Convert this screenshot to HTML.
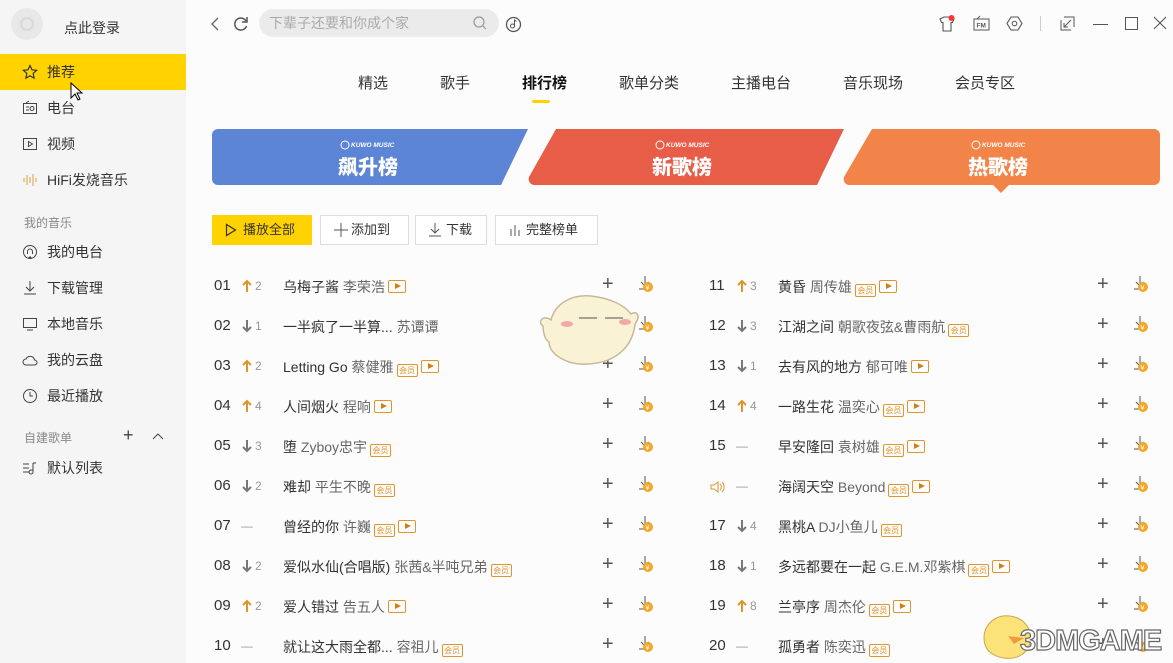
<!DOCTYPE html><html><head><meta charset="utf-8"><style>
*{margin:0;padding:0;box-sizing:border-box}
body{width:1173px;height:663px;overflow:hidden;background:#fcfcfc;font-family:"Liberation Sans","Noto Sans CJK SC",sans-serif;position:relative;color:#333}
.a{position:absolute;white-space:nowrap}
#side{position:absolute;left:0;top:0;width:186px;height:663px;background:#f5f5f5}
.si{position:absolute;left:0;width:186px;height:36px;font-size:14px;color:#333;line-height:36px;padding-left:47px}
.si svg{position:absolute;left:22px;top:10px}
.sh{position:absolute;left:24px;font-size:12px;color:#888}
.tab{position:absolute;top:72px;font-size:15px;color:#333}
.btn{position:absolute;top:215px;height:30px;border:1px solid #ddd;background:#fff;font-size:13px;line-height:28px;color:#333;padding-left:30px}
.row{position:absolute;height:20px;width:460px;font-size:14px}
.row .n{position:absolute;left:0;top:0;font-size:15px;color:#333}
.row .ar{position:absolute;left:27px;top:2px}
.row .c{position:absolute;left:41px;top:2px;font-size:12px;color:#999}
.row .t{position:absolute;left:69px;top:0;color:#333}
.row .t span{color:#666}
.vip,.mv{display:inline-block;vertical-align:-1px;border:1px solid #e0952c;border-radius:2px;height:13px;margin-left:3px;position:relative}
.vip{width:21px;font-size:8px;color:#e0952c;line-height:11px;text-align:center;font-style:normal}
.mv{width:18px}
.mv:after{content:"";position:absolute;left:6px;top:2px;border-left:6px solid #d0801a;border-top:3.5px solid transparent;border-bottom:3.5px solid transparent}
.row .p{position:absolute;left:388px;top:-4px;font-size:20px;color:#555;font-weight:300}
.row .d{position:absolute;left:424px;top:-2px}
</style></head><body>
<svg width="0" height="0" style="position:absolute"><defs>
<g id="dl"><path d="M7 1v10M3 7l4 4 4-4M1 14h9" fill="none" stroke="#555"/><circle cx="10" cy="12" r="5" fill="#f5a623"/><text x="7.5" y="15" font-size="7" fill="#fff" font-family="Liberation Sans">¥</text></g>
<g id="up"><path d="M6 2v11M2 6l4-4 4 4" fill="none" stroke="#e0952c" stroke-width="2"/></g>
<g id="dn"><path d="M6 1v11M2 8l4 4 4-4" fill="none" stroke="#777" stroke-width="2"/></g>
</defs></svg>
<div id="side">
<div class="a" style="left:11px;top:8px;width:32px;height:32px;border-radius:50%;background:#e8e8e8"></div>
<div class="a" style="left:20px;top:17px;width:14px;height:14px;border-radius:50%;border:2px solid #d8d8d8"></div>
<div class="a" style="left:64px;top:18px;font-size:14px;color:#333">点此登录</div>
<div class="si" style="top:54px;background:#ffd200">推荐<svg width="16" height="16" viewBox="0 0 16 16"><path d="M8 1.5l2 4.3 4.6.5-3.4 3.2.9 4.6L8 11.8 3.9 14.1l.9-4.6L1.4 6.3 6 5.8z" fill="none" stroke="#333" stroke-width="1.2"/></svg></div>
<svg class="a" style="left:70px;top:82px" width="14" height="20" viewBox="0 0 14 20"><path d="M1 1v15l4-4 3 6 2-1-3-6h5z" fill="#fff" stroke="#000"/></svg>
<div class="si" style="top:90px">电台<svg width="16" height="16"><rect x="1.5" y="3.5" width="13" height="10" fill="none" stroke="#444"/><circle cx="10" cy="8.5" r="2" fill="none" stroke="#444"/><path d="M4 7h3M4 10h3M4 3l3-2" stroke="#444"/></svg></div>
<div class="si" style="top:126px">视频<svg width="16" height="16"><rect x="1.5" y="2.5" width="13" height="11" fill="none" stroke="#444"/><path d="M6.5 5.5v5l4-2.5z" fill="none" stroke="#444"/></svg></div>
<div class="si" style="top:162px">HiFi发烧音乐<svg width="16" height="16"><path d="M2 6v4M5 3v10M8 5v6M11 2v12M14 6v4" stroke="#e0a040" stroke-width="1"/></svg></div>
<div class="sh" style="top:214px">我的音乐</div>
<div class="si" style="top:234px">我的电台<svg width="16" height="16"><circle cx="8" cy="8" r="6.5" fill="none" stroke="#444"/><path d="M5.5 10V7.5a2.5 2.5 0 015 0V10" fill="none" stroke="#444"/><path d="M6 14h4l-2-2z" fill="#444"/></svg></div>
<div class="si" style="top:270px">下载管理<svg width="16" height="16"><path d="M8 1v10M4 7l4 4 4-4M2 14h12" fill="none" stroke="#444"/></svg></div>
<div class="si" style="top:306px">本地音乐<svg width="16" height="16"><rect x="1.5" y="2.5" width="13" height="9" fill="none" stroke="#444"/><path d="M5 14h6" stroke="#444"/></svg></div>
<div class="si" style="top:342px">我的云盘<svg width="16" height="16"><path d="M4 13a3 3 0 010-6 4.5 4.5 0 018.5 1 2.5 2.5 0 010 5z" fill="none" stroke="#444"/></svg></div>
<div class="si" style="top:378px">最近播放<svg width="16" height="16"><circle cx="8" cy="8" r="6.5" fill="none" stroke="#444"/><path d="M8 4v4h3" fill="none" stroke="#444"/></svg></div>
<div class="sh" style="top:429px">自建歌单</div>
<div class="a" style="left:123px;top:425px;font-size:18px;color:#444;font-weight:300">+</div>
<svg class="a" style="left:152px;top:432px" width="12" height="8"><path d="M1 7l5-5 5 5" fill="none" stroke="#444"/></svg>
<div class="si" style="top:450px">默认列表<svg width="16" height="16"><path d="M1 4h6M1 8h6M1 12h6M11 3v9a2 2 0 11-2-2h2M11 3h3" fill="none" stroke="#444"/></svg></div>
</div>

<svg class="a" style="left:208px;top:16px" width="14" height="16"><path d="M10 2L4 8l6 6" fill="none" stroke="#666" stroke-width="1.3"/></svg>
<svg class="a" style="left:232px;top:15px" width="18" height="18"><path d="M14 6a6 6 0 10.5 5" fill="none" stroke="#555" stroke-width="1.5"/><path d="M15 2v5h-5" fill="none" stroke="#555" stroke-width="1.5"/></svg>
<div class="a" style="left:259px;top:9px;width:240px;height:28px;border-radius:14px;background:#ebebeb;font-size:14px;color:#aaa;line-height:28px;padding-left:10px">下辈子还要和你成个家</div>
<svg class="a" style="left:473px;top:16px" width="14" height="14"><circle cx="6" cy="6" r="5" fill="none" stroke="#999" stroke-width="1.2"/><path d="M10 10l3 3" stroke="#999" stroke-width="1.2"/></svg>
<svg class="a" style="left:505px;top:16px" width="17" height="17"><circle cx="8.5" cy="8.5" r="7" fill="none" stroke="#555" stroke-width="1.3"/><circle cx="7.5" cy="10" r="2" fill="none" stroke="#555"/><path d="M9.5 10V4l2 1.5" fill="none" stroke="#555"/></svg>

<svg class="a" style="left:938px;top:15px" width="18" height="18"><path d="M2 4l4-2h6l4 2-1.5 3.5H13V16H5V7.5H3.5z" fill="none" stroke="#555" stroke-width="1.1"/><circle cx="13.5" cy="3" r="3" fill="#f33"/></svg>
<svg class="a" style="left:973px;top:15px" width="17" height="17"><rect x="1" y="4" width="15" height="11" fill="none" stroke="#555"/><path d="M4 4l3-3" stroke="#555"/><text x="3.5" y="12.5" font-size="6.5" font-family="Liberation Sans" font-weight="bold" fill="#555">FM</text></svg>
<svg class="a" style="left:1006px;top:15px" width="17" height="17"><path d="M5 2h7l4 6.5-4 6.5H5L1 8.5z" fill="none" stroke="#555" stroke-width="1.1"/><circle cx="8.5" cy="8.5" r="2.3" fill="none" stroke="#555"/></svg>
<div class="a" style="left:1040px;top:16px;width:1px;height:15px;background:#ccc"></div>
<svg class="a" style="left:1060px;top:16px" width="15" height="15"><path d="M4 1h10v10M1 4v10h10M11 4l-7 7M4 7v4h4" fill="none" stroke="#555"/></svg>
<div class="a" style="left:1093px;top:24px;width:15px;height:1px;background:#555"></div>
<div class="a" style="left:1125px;top:17px;width:13px;height:13px;border:1.2px solid #555"></div>
<svg class="a" style="left:1153px;top:16px" width="14" height="14"><path d="M1 1l12 12M13 1L1 13" stroke="#555" stroke-width="1.1"/></svg>

<div class="tab" style="left:358px">精选</div>
<div class="tab" style="left:440px">歌手</div>
<div class="tab" style="left:522px;font-weight:bold;color:#111">排行榜</div>
<div class="a" style="left:532px;top:100px;width:18px;height:3px;background:#ffd200;border-radius:2px"></div>
<div class="tab" style="left:619px">歌单分类</div>
<div class="tab" style="left:731px">主播电台</div>
<div class="tab" style="left:843px">音乐现场</div>
<div class="tab" style="left:955px">会员专区</div>

<svg class="a" style="left:212px;top:129px" width="950" height="64">
<path d="M6 0H316L289 56H6A6 6 0 010 50V6A6 6 0 016 0z" fill="#5d85d6"/>
<path d="M344 0H632L605 56H322A6 6 0 01317 48z" fill="#e75d48"/>
<path d="M660 0H942A6 6 0 01948 6V50A6 6 0 01942 56H637A6 6 0 01632 48z" fill="#f2844a"/>
<path d="M781 56h16l-8 8z" fill="#f2844a"/>
<g fill="#fff" font-family="Liberation Sans" font-weight="bold" font-style="italic" font-size="6.5"><text x="139" y="18">KUWO MUSIC</text><text x="454" y="18">KUWO MUSIC</text><text x="770" y="18">KUWO MUSIC</text></g>
<g fill="none" stroke="#fff"><circle cx="133" cy="16" r="4"/><circle cx="448" cy="16" r="4"/><circle cx="764" cy="16" r="4"/></g>
<g fill="#fff" font-family="Noto Sans CJK SC" font-weight="900" font-size="20"><text x="126" y="45">飙升榜</text><text x="440" y="45">新歌榜</text><text x="756" y="45">热歌榜</text></g>
</svg>

<div class="btn" style="left:212px;width:100px;background:#ffd200;border-color:#ffd200">播放全部<svg class="a" style="left:12px;top:7px" width="12" height="14"><path d="M1.5 1.5v11l9-5.5z" fill="none" stroke="#333" stroke-width="1.2"/></svg></div>
<div class="btn" style="left:320px;width:89px">添加到<svg class="a" style="left:13px;top:7px" width="14" height="14"><path d="M7 0v14M0 7h14" stroke="#555"/></svg></div>
<div class="btn" style="left:415px;width:72px">下载<svg class="a" style="left:12px;top:6px" width="14" height="16"><path d="M7 1v10M3 7l4 4 4-4M1 14h12" fill="none" stroke="#555"/></svg></div>
<div class="btn" style="left:495px;width:103px">完整榜单<svg class="a" style="left:13px;top:8px" width="14" height="13"><path d="M2 5v7M6 1v11M10 6v6" stroke="#555"/></svg></div>

<div class="row" style="left:214px;top:277px"><span class="n">01</span><svg class="ar" width="12" height="14"><use href="#up"/></svg><span class="c">2</span><span class="t">乌梅子酱 <span>李荣浩</span><i class="mv"></i></span><span class="p">+</span><svg class="d" width="16" height="18"><use href="#dl"/></svg></div>
<div class="row" style="left:214px;top:317px"><span class="n">02</span><svg class="ar" width="12" height="14"><use href="#dn"/></svg><span class="c">1</span><span class="t">一半疯了一半算... <span>苏谭谭</span></span><span class="p">+</span><svg class="d" width="16" height="18"><use href="#dl"/></svg></div>
<div class="row" style="left:214px;top:357px"><span class="n">03</span><svg class="ar" width="12" height="14"><use href="#up"/></svg><span class="c">2</span><span class="t">Letting Go <span>蔡健雅</span><i class="vip">会员</i><i class="mv"></i></span><span class="p">+</span><svg class="d" width="16" height="18"><use href="#dl"/></svg></div>
<div class="row" style="left:214px;top:397px"><span class="n">04</span><svg class="ar" width="12" height="14"><use href="#up"/></svg><span class="c">4</span><span class="t">人间烟火 <span>程响</span><i class="mv"></i></span><span class="p">+</span><svg class="d" width="16" height="18"><use href="#dl"/></svg></div>
<div class="row" style="left:214px;top:437px"><span class="n">05</span><svg class="ar" width="12" height="14"><use href="#dn"/></svg><span class="c">3</span><span class="t">堕 <span>Zyboy忠宇</span><i class="vip">会员</i></span><span class="p">+</span><svg class="d" width="16" height="18"><use href="#dl"/></svg></div>
<div class="row" style="left:214px;top:477px"><span class="n">06</span><svg class="ar" width="12" height="14"><use href="#dn"/></svg><span class="c">2</span><span class="t">难却 <span>平生不晚</span><i class="vip">会员</i></span><span class="p">+</span><svg class="d" width="16" height="18"><use href="#dl"/></svg></div>
<div class="row" style="left:214px;top:517px"><span class="n">07</span><span class="c" style="left:27px">—</span><span class="t">曾经的你 <span>许巍</span><i class="vip">会员</i><i class="mv"></i></span><span class="p">+</span><svg class="d" width="16" height="18"><use href="#dl"/></svg></div>
<div class="row" style="left:214px;top:557px"><span class="n">08</span><svg class="ar" width="12" height="14"><use href="#dn"/></svg><span class="c">2</span><span class="t">爱似水仙(合唱版) <span>张茜&amp;半吨兄弟</span><i class="vip">会员</i></span><span class="p">+</span><svg class="d" width="16" height="18"><use href="#dl"/></svg></div>
<div class="row" style="left:214px;top:597px"><span class="n">09</span><svg class="ar" width="12" height="14"><use href="#up"/></svg><span class="c">2</span><span class="t">爱人错过 <span>告五人</span><i class="mv"></i></span><span class="p">+</span><svg class="d" width="16" height="18"><use href="#dl"/></svg></div>
<div class="row" style="left:214px;top:637px"><span class="n">10</span><span class="c" style="left:27px">—</span><span class="t">就让这大雨全都... <span>容祖儿</span><i class="vip">会员</i></span><span class="p">+</span><svg class="d" width="16" height="18"><use href="#dl"/></svg></div>

<div class="row" style="left:709px;top:277px"><span class="n">11</span><svg class="ar" width="12" height="14"><use href="#up"/></svg><span class="c">3</span><span class="t">黄昏 <span>周传雄</span><i class="vip">会员</i><i class="mv"></i></span><span class="p">+</span><svg class="d" width="16" height="18"><use href="#dl"/></svg></div>
<div class="row" style="left:709px;top:317px"><span class="n">12</span><svg class="ar" width="12" height="14"><use href="#dn"/></svg><span class="c">3</span><span class="t">江湖之间 <span>朝歌夜弦&amp;曹雨航</span><i class="vip">会员</i></span><span class="p">+</span><svg class="d" width="16" height="18"><use href="#dl"/></svg></div>
<div class="row" style="left:709px;top:357px"><span class="n">13</span><svg class="ar" width="12" height="14"><use href="#dn"/></svg><span class="c">1</span><span class="t">去有风的地方 <span>郁可唯</span><i class="mv"></i></span><span class="p">+</span><svg class="d" width="16" height="18"><use href="#dl"/></svg></div>
<div class="row" style="left:709px;top:397px"><span class="n">14</span><svg class="ar" width="12" height="14"><use href="#up"/></svg><span class="c">4</span><span class="t">一路生花 <span>温奕心</span><i class="vip">会员</i><i class="mv"></i></span><span class="p">+</span><svg class="d" width="16" height="18"><use href="#dl"/></svg></div>
<div class="row" style="left:709px;top:437px"><span class="n">15</span><span class="c" style="left:27px">—</span><span class="t">早安隆回 <span>袁树雄</span><i class="vip">会员</i><i class="mv"></i></span><span class="p">+</span><svg class="d" width="16" height="18"><use href="#dl"/></svg></div>
<div class="row" style="left:709px;top:477px"><svg class="a" style="left:0;top:2px" width="16" height="16"><path d="M2 6h3l4-3v10l-4-3H2z" fill="none" stroke="#e0952c"/><path d="M11 5a4 4 0 010 6M13 3a7 7 0 010 10" fill="none" stroke="#e0952c"/></svg><span class="c" style="left:27px">—</span><span class="t">海阔天空 <span>Beyond</span><i class="vip">会员</i><i class="mv"></i></span><span class="p">+</span><svg class="d" width="16" height="18"><use href="#dl"/></svg></div>
<div class="row" style="left:709px;top:517px"><span class="n">17</span><svg class="ar" width="12" height="14"><use href="#dn"/></svg><span class="c">4</span><span class="t">黑桃A <span>DJ小鱼儿</span><i class="vip">会员</i></span><span class="p">+</span><svg class="d" width="16" height="18"><use href="#dl"/></svg></div>
<div class="row" style="left:709px;top:557px"><span class="n">18</span><svg class="ar" width="12" height="14"><use href="#dn"/></svg><span class="c">1</span><span class="t">多远都要在一起 <span>G.E.M.邓紫棋</span><i class="vip">会员</i><i class="mv"></i></span><span class="p">+</span><svg class="d" width="16" height="18"><use href="#dl"/></svg></div>
<div class="row" style="left:709px;top:597px"><span class="n">19</span><svg class="ar" width="12" height="14"><use href="#up"/></svg><span class="c">8</span><span class="t">兰亭序 <span>周杰伦</span><i class="vip">会员</i><i class="mv"></i></span><span class="p">+</span><svg class="d" width="16" height="18"><use href="#dl"/></svg></div>
<div class="row" style="left:709px;top:637px"><span class="n">20</span><span class="c" style="left:27px">—</span><span class="t">孤勇者 <span>陈奕迅</span><i class="vip">会员</i></span><span class="p">+</span><svg class="d" width="16" height="18"><use href="#dl"/></svg></div>

<svg class="a" style="left:535px;top:288px" width="105" height="88"><path d="M8 38c-6-4 0-12 8-6 4-16 20-26 40-24 20 2 34 10 40 18 6-4 10 2 4 10-2 20-16 38-46 40-22 2-40-10-40-22-4-2-6-10-6-16z" fill="#faf2d4" stroke="#c8b89a" stroke-width="1.5"/><ellipse cx="32" cy="36" rx="6" ry="3" fill="#f3a9a9"/><ellipse cx="90" cy="34" rx="6" ry="3" fill="#f3a9a9"/><path d="M44 30h18M70 30h18" stroke="#887" stroke-width="1.5"/></svg>
<svg class="a" style="left:978px;top:610px" width="60" height="53"><path d="M6 28c0-14 12-24 26-22 14 2 22 12 20 26-2 12-14 18-26 16C14 46 6 40 6 28z" fill="#fbe37a" stroke="#c9a84a"/><path d="M30 26l16 2-10 6z" fill="#f29b3c"/></svg>
<div class="a" style="left:1020px;top:625px;font-size:29px;font-weight:bold;color:#fff;letter-spacing:-1px;-webkit-text-stroke:1.2px #666">3DMGAME</div>
</body></html>
